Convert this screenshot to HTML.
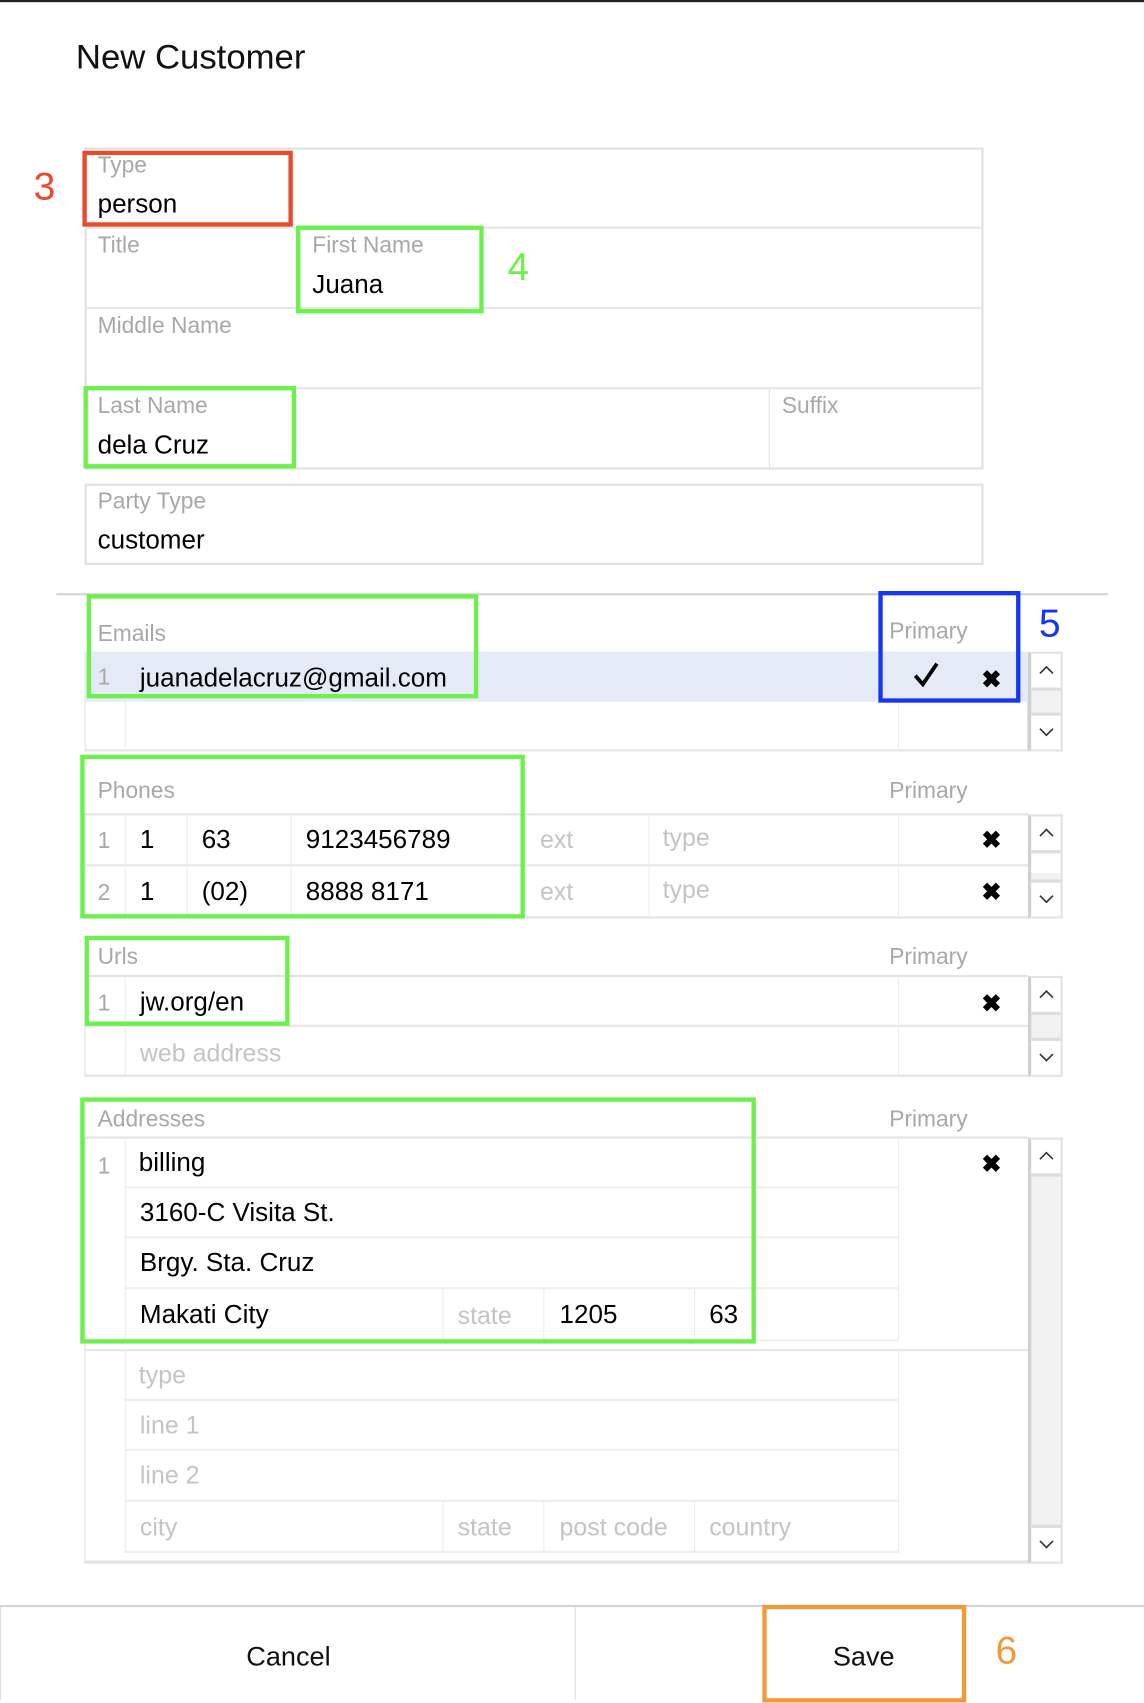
<!DOCTYPE html>
<html><head><meta charset="utf-8"><style>
html,body{margin:0;padding:0;width:1144px;height:1700px;overflow:hidden;background:#fff}
#w{position:absolute;left:0;top:0;width:1055px;height:1568px;transform:scale(1.0844);transform-origin:0 0;font-family:"Liberation Sans",sans-serif}
.a{position:absolute;box-sizing:border-box}
.t{position:absolute;white-space:nowrap;line-height:1}
.lb{color:#a8a8a8;font-size:21px}
.v{color:#000;font-size:24px}
.g{color:#c4c4c4;font-size:23px}
.bx{position:absolute;box-sizing:border-box;border:1px solid #e0e0e0}
.hl{position:absolute;height:2px;background:#e6e6e6}
.vl{position:absolute;width:1px;background:#ececec}
.gb{position:absolute;box-sizing:border-box;border:4px solid #6cf04c}
.sb{position:absolute;box-sizing:border-box;border:2px solid #e3e3e3;border-left:3px solid #d0d0d0;background:#f2f2f2}
.sb .u,.sb .d{position:absolute;left:0;right:0;height:31px;background:#fff}
.sb svg{position:absolute;left:7px;top:10px}
.sb .u{top:0;border-bottom:3px solid #ddd}.sb .d{bottom:0;border-top:3px solid #ddd}
.x{position:absolute;font-size:22px;font-weight:bold;line-height:1}
</style></head><body><div id="w">
<div class="a" style="left:0;top:0;width:1055px;height:2px;background:#222"></div>
<div class="t" style="left:70px;top:36px;font-size:32px;color:#111">New Customer</div>

<div class="bx" style="left:78px;top:136px;width:829px;height:297px;border-width:2px"></div>
<div class="hl" style="left:78px;top:209px;width:829px"></div>
<div class="hl" style="left:78px;top:283px;width:829px"></div>
<div class="hl" style="left:78px;top:357px;width:829px"></div>
<div class="vl" style="left:709px;top:358px;height:74px;background:#e0e0e0"></div>
<div class="t lb" style="left:90px;top:142px">Type</div>
<div class="t v" style="left:90px;top:177px">person</div>
<div class="t lb" style="left:90px;top:216px">Title</div>
<div class="t lb" style="left:288px;top:216px">First Name</div>
<div class="t v" style="left:288px;top:251px">Juana</div>
<div class="t lb" style="left:90px;top:290px">Middle Name</div>
<div class="t lb" style="left:90px;top:364px">Last Name</div>
<div class="t v" style="left:90px;top:399px">dela Cruz</div>
<div class="t lb" style="left:721px;top:364px">Suffix</div>
<div class="bx" style="left:78px;top:446px;width:829px;height:75px;border-width:2px"></div>
<div class="t lb" style="left:90px;top:452px">Party Type</div>
<div class="t v" style="left:90px;top:487px">customer</div>

<div class="a" style="left:76px;top:139px;width:194px;height:70px;border:4px solid #ea4a2c"></div>
<div class="t" style="left:31px;top:154px;font-size:36px;color:#ea4a2c">3</div>
<div class="gb" style="left:273px;top:208px;width:173px;height:81px"></div>
<div class="t" style="left:468px;top:228px;font-size:36px;color:#6cf04c">4</div>
<div class="gb" style="left:77px;top:356px;width:196px;height:76px"></div>

<div class="a" style="left:52px;top:547px;width:970px;height:2px;background:#d6d6d6"></div>

<!-- Emails -->
<div class="t lb" style="left:90px;top:574px">Emails</div>
<div class="t lb" style="left:820px;top:572px">Primary</div>
<div class="a" style="left:78px;top:601px;width:870px;height:92px;border:1px solid #e3e3e3;border-bottom:2px solid #e3e3e3"></div>
<div class="a" style="left:78px;top:601px;width:870px;height:46px;background:#e4ebf6"></div>
<div class="vl" style="left:115px;top:647px;height:45px"></div>
<div class="vl" style="left:828px;top:601px;height:92px"></div>
<div class="t lb" style="left:90px;top:614px">1</div>
<div class="t v" style="left:129px;top:614px">juanadelacruz@gmail.com</div>
<svg class="a" style="left:842px;top:610px" width="24" height="24" viewBox="0 0 24 24"><path d="M2 13 L9 21 L22 2" fill="none" stroke="#000" stroke-width="3.5"/></svg>
<div class="x" style="left:905px;top:616px">&#10006;</div>
<div class="sb" style="left:948px;top:601px;width:32px;height:92px"><div class="u"><svg width="14" height="10"><path d="M1 8 L7 2 L13 8" fill="none" stroke="#333" stroke-width="1.5"/></svg></div><div class="d"><svg width="14" height="10"><path d="M1 2 L7 8 L13 2" fill="none" stroke="#333" stroke-width="1.5"/></svg></div></div>
<div class="gb" style="left:80px;top:548px;width:361px;height:96px"></div>
<div class="a" style="left:810px;top:545px;width:131px;height:103px;border:4px solid #1736f2"></div>
<div class="t" style="left:958px;top:557px;font-size:36px;color:#1736f2">5</div>

<!-- Phones -->
<div class="t lb" style="left:90px;top:719px">Phones</div>
<div class="t lb" style="left:820px;top:719px">Primary</div>
<div class="a" style="left:78px;top:750px;width:870px;height:97px;border-top:2px solid #e3e3e3;border-bottom:2px solid #e3e3e3;border-left:1px solid #e3e3e3"></div>
<div class="hl" style="left:78px;top:797px;width:870px"></div>
<div class="vl" style="left:115px;top:751px;height:95px"></div>
<div class="vl" style="left:172px;top:751px;height:95px"></div>
<div class="vl" style="left:268px;top:751px;height:95px"></div>
<div class="vl" style="left:482px;top:751px;height:95px"></div>
<div class="vl" style="left:598px;top:751px;height:95px"></div>
<div class="vl" style="left:828px;top:751px;height:95px"></div>
<div class="t lb" style="left:90px;top:765px">1</div>
<div class="t v" style="left:129px;top:763px">1</div>
<div class="t v" style="left:186px;top:763px">63</div>
<div class="t v" style="left:282px;top:763px">9123456789</div>
<div class="t g" style="left:498px;top:763px">ext</div>
<div class="t g" style="left:611px;top:761px">type</div>
<div class="x" style="left:905px;top:764px">&#10006;</div>
<div class="t lb" style="left:90px;top:813px">2</div>
<div class="t v" style="left:129px;top:811px">1</div>
<div class="t v" style="left:186px;top:811px">(02)</div>
<div class="t v" style="left:282px;top:811px">8888 8171</div>
<div class="t g" style="left:498px;top:811px">ext</div>
<div class="t g" style="left:611px;top:809px">type</div>
<div class="x" style="left:905px;top:812px">&#10006;</div>
<div class="sb" style="left:948px;top:751px;width:32px;height:96px"><div class="u"><svg width="14" height="10"><path d="M1 8 L7 2 L13 8" fill="none" stroke="#333" stroke-width="1.5"/></svg></div><div class="a" style="left:0;right:0;top:34px;height:18px;background:#fff"></div><div class="d"><svg width="14" height="10"><path d="M1 2 L7 8 L13 2" fill="none" stroke="#333" stroke-width="1.5"/></svg></div></div>
<div class="gb" style="left:74px;top:696px;width:410px;height:151px"></div>

<!-- Urls -->
<div class="t lb" style="left:90px;top:872px">Urls</div>
<div class="t lb" style="left:820px;top:872px">Primary</div>
<div class="a" style="left:78px;top:899px;width:870px;height:94px;border-top:2px solid #e3e3e3;border-bottom:2px solid #e3e3e3;border-left:1px solid #e3e3e3"></div>
<div class="hl" style="left:78px;top:945px;width:870px"></div>
<div class="vl" style="left:115px;top:900px;height:92px"></div>
<div class="vl" style="left:828px;top:900px;height:92px"></div>
<div class="t lb" style="left:90px;top:915px">1</div>
<div class="t v" style="left:129px;top:913px">jw.org/en</div>
<div class="t g" style="left:129px;top:960px">web address</div>
<div class="x" style="left:905px;top:915px">&#10006;</div>
<div class="sb" style="left:948px;top:900px;width:32px;height:93px"><div class="u"><svg width="14" height="10"><path d="M1 8 L7 2 L13 8" fill="none" stroke="#333" stroke-width="1.5"/></svg></div><div class="d"><svg width="14" height="10"><path d="M1 2 L7 8 L13 2" fill="none" stroke="#333" stroke-width="1.5"/></svg></div></div>
<div class="gb" style="left:78px;top:863px;width:189px;height:83px"></div>

<!-- Addresses -->
<div class="t lb" style="left:90px;top:1022px">Addresses</div>
<div class="t lb" style="left:820px;top:1022px">Primary</div>
<div class="a" style="left:78px;top:1048px;width:870px;height:394px;border-top:2px solid #e3e3e3;border-bottom:3px solid #e3e3e3;border-left:1px solid #e3e3e3"></div>
<div class="hl" style="left:115px;top:1094px;width:713px;background:#efefef"></div>
<div class="hl" style="left:115px;top:1140px;width:713px;background:#efefef"></div>
<div class="hl" style="left:115px;top:1187px;width:713px;background:#efefef"></div>
<div class="hl" style="left:115px;top:1235px;width:713px;background:#efefef"></div>
<div class="hl" style="left:78px;top:1244px;width:870px"></div>
<div class="hl" style="left:115px;top:1290px;width:713px;background:#efefef"></div>
<div class="hl" style="left:115px;top:1336px;width:713px;background:#efefef"></div>
<div class="hl" style="left:115px;top:1383px;width:713px;background:#efefef"></div>
<div class="hl" style="left:115px;top:1430px;width:713px;background:#efefef"></div>
<div class="vl" style="left:115px;top:1050px;height:186px"></div>
<div class="vl" style="left:828px;top:1050px;height:186px"></div>
<div class="vl" style="left:115px;top:1246px;height:186px"></div>
<div class="vl" style="left:828px;top:1246px;height:186px"></div>
<div class="vl" style="left:408px;top:1189px;height:47px"></div>
<div class="vl" style="left:501px;top:1189px;height:47px"></div>
<div class="vl" style="left:640px;top:1189px;height:47px"></div>
<div class="vl" style="left:408px;top:1385px;height:47px"></div>
<div class="vl" style="left:501px;top:1385px;height:47px"></div>
<div class="vl" style="left:640px;top:1385px;height:47px"></div>
<div class="t lb" style="left:90px;top:1065px">1</div>
<div class="t v" style="left:128px;top:1061px">billing</div>
<div class="t v" style="left:129px;top:1107px">3160-C Visita St.</div>
<div class="t v" style="left:129px;top:1153px">Brgy. Sta. Cruz</div>
<div class="t v" style="left:129px;top:1201px">Makati City</div>
<div class="t g" style="left:422px;top:1202px">state</div>
<div class="t v" style="left:516px;top:1201px">1205</div>
<div class="t v" style="left:654px;top:1201px">63</div>
<div class="x" style="left:905px;top:1063px">&#10006;</div>
<div class="t g" style="left:128px;top:1257px">type</div>
<div class="t g" style="left:129px;top:1303px">line 1</div>
<div class="t g" style="left:129px;top:1349px">line 2</div>
<div class="t g" style="left:129px;top:1397px">city</div>
<div class="t g" style="left:422px;top:1397px">state</div>
<div class="t g" style="left:516px;top:1397px">post code</div>
<div class="t g" style="left:654px;top:1397px">country</div>
<div class="sb" style="left:948px;top:1049px;width:32px;height:393px"><div class="u"><svg width="14" height="10"><path d="M1 8 L7 2 L13 8" fill="none" stroke="#333" stroke-width="1.5"/></svg></div><div class="d"><svg width="14" height="10"><path d="M1 2 L7 8 L13 2" fill="none" stroke="#333" stroke-width="1.5"/></svg></div></div>
<div class="gb" style="left:74px;top:1012px;width:623px;height:227px"></div>

<div class="a" style="left:0;top:1480px;width:1055px;height:88px;border-top:2px solid #d4d4d4;border-left:1px solid #ddd"></div>
<div class="a" style="left:530px;top:1482px;width:1px;height:86px;background:#ddd"></div>
<div class="t" style="left:0;width:532px;text-align:center;top:1516px;font-size:25px;color:#111">Cancel</div>
<div class="t" style="left:703px;width:187px;text-align:center;top:1516px;font-size:25px;color:#111">Save</div>
<div class="a" style="left:703px;top:1480px;width:188px;height:90px;border:4px solid #f29a3a"></div>
<div class="t" style="left:918px;top:1504px;font-size:36px;color:#f29a3a">6</div>
</div></body></html>
